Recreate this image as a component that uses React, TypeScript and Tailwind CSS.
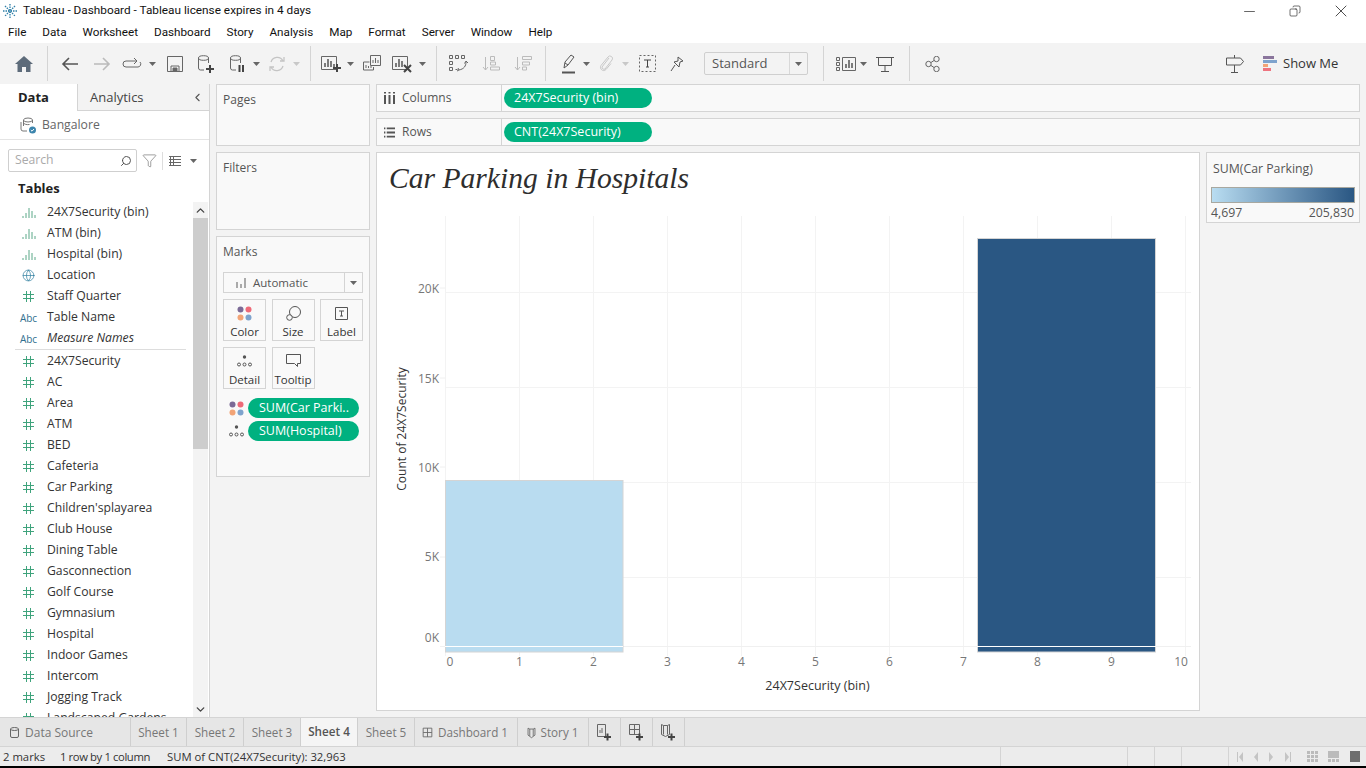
import React from 'react';
import { X, Minus, Copy, ChevronLeft, ChevronUp, ChevronDown, Globe, Search, Filter } from 'lucide-react';

const font = 'font-["Open_Sans","Noto_Sans",sans-serif]';

const Caret = ({ light = false }: { light?: boolean }) => (
    <svg width="7" height="4" viewBox="0 0 7 4" className="shrink-0">
        <path d="M0 0h7L3.500 4z" fill={light ? '#c8c8c8' : '#666'} />
    </svg>
);

const Sep = () => <div className="w-px h-[35px] bg-[#d4d4d4] shrink-0" />;

// toolbar drawings
const Ico = ({ children, w = 20, h = 20 }: { children: React.ReactNode; w?: number; h?: number }) => (
    <svg width={w} height={h} viewBox={`0 0 ${w} ${h}`} fill="none" stroke="#666" strokeWidth="1" className="shrink-0">
        {children}
    </svg>
);

const Plus = ({ x, y }: { x: number; y: number }) => (
    <path d={`M${x - 4} ${y}h8M${x} ${y - 4}v8`} stroke="#444" strokeWidth="2" />
);

const Toolbar = () => (
    <div className="h-[41px] bg-[#f3f3f3] flex items-center shrink-0">
        <div className="w-[47px] flex justify-center">
            <svg width="18" height="16" viewBox="0 0 18 16"><path d="M9 0 0 8h2.500v8h4.500v-5h4v5h4.500V8H18z" fill="#5d6b7a" /></svg>
        </div>
        <Sep />
        <div className="ml-[13px] flex items-center">
            <Ico w={18} h={16}><path d="M17 8H2M8 2 2 8l6 6" stroke="#555" strokeWidth="1.600" /></Ico>
            <div className="w-[14px]" />
            <Ico w={18} h={16}><path d="M1 8h15M10 2l6 6-6 6" stroke="#bbb" strokeWidth="1.600" /></Ico>
            <div className="w-[11px]" />
            <Ico w={20} h={14}><path d="M15 4H4a3 3 0 0 0 0 6h12a3 3 0 0 0 2-5M12 1l3 3-3 3" /></Ico>
            <div className="w-[7px]" />
            <Caret />
            <div className="w-[11px]" />
            <Ico w={16} h={16}><path d="M.5.500h15v15H.5zM4 15.500V10h8v5.500" /><path d="M6 12h4v3H6z" fill="#666" /></Ico>
            <div className="w-[14px]" />
            <Ico w={18} h={18}><ellipse cx="6.500" cy="3" rx="5" ry="2.300" /><path d="M1.500 3v10a2 2 0 0 0 2 2H7M11.500 3v5" /><Plus x={13} y={14} /></Ico>
            <div className="w-[14px]" />
            <Ico w={18} h={18}><ellipse cx="6.500" cy="3" rx="5" ry="2.300" /><path d="M1.500 3v10a2 2 0 0 0 2 2H7M11.500 3v5" /><path d="M10.500 10v7M14 10v7" stroke="#444" strokeWidth="2" /></Ico>
            <div className="w-[6px]" />
            <Caret />
            <div className="w-[8px]" />
            <Ico w={18} h={18}><path d="M3 7a6.500 6.500 0 0 1 12-1M15 11a6.500 6.500 0 0 1-12 1M16 2v4h-4M2 16v-4h4" stroke="#c4c4c4" strokeWidth="1.300" /></Ico>
            <div className="w-[7px]" />
            <Caret light />
        </div>
        <div className="w-[10px]" />
        <Sep />
        <div className="ml-[10px] flex items-center">
            <Ico w={22} h={18}><path d="M.5 1.500h15v13H.5z" /><path d="M4 12V8M7 12V4M10 12V6M13 12V9" stroke="#555" strokeWidth="1.500" /><Plus x={16} y={13} /></Ico>
            <div className="w-[4px]" />
            <Caret />
            <div className="w-[9px]" />
            <Ico w={20} h={18}><path d="M7.500.500h10v10h-10zM.5 7h6M.5 7v8h10v-3" /><path d="M10 8V5M12.500 8V3M15 8V5M3 13v-3M5.500 13v-2M8 13v-2" /></Ico>
            <div className="w-[9px]" />
            <Ico w={22} h={18}><path d="M.5 1.500h15v13H.5z" /><path d="M4 12V8M7 12V4M10 12V6" stroke="#555" strokeWidth="1.500" /><path d="m12 10 7 7M19 10l-7 7" stroke="#444" strokeWidth="2" /></Ico>
            <div className="w-[5px]" />
            <Caret />
        </div>
        <div className="w-[10px]" />
        <Sep />
        <div className="ml-[12px] flex items-center">
            <Ico w={20} h={18}><path d="M.5.500h3v3h-3zM6.500.500h3v3h-3zM12.500.500h3v3h-3zM.5 6.500h3v3h-3zM.5 12.500h3v3h-3zM6.500 14.500h2" /><path d="M17 7c0 4-2 7-7 8M9 13l1 2-2 1M15.500 8.500 17 6l2 2" /></Ico>
            <div className="w-[13px]" />
            <Ico w={18} h={18}><path d="M3.500 2v13M1 12l2.500 3L6 12" stroke="#bbb" /><path d="M8.500 1.500h4v4h-4zM8.500 7h5v3h-5zM8.500 12h9v3h-9z" stroke="#bbb" /></Ico>
            <div className="w-[14px]" />
            <Ico w={18} h={18}><path d="M3.500 2v13M1 12l2.500 3L6 12" stroke="#bbb" /><path d="M8.500 1.500h9v3h-9zM8.500 7h7v3h-7zM8.500 12h4v3h-4z" stroke="#bbb" /></Ico>
        </div>
        <div className="w-[13px]" />
        <Sep />
        <div className="ml-[16px] flex items-center">
            <Ico w={14} h={20}><path d="M2 14 3 8l6-7 3 2-6 8zM3 9l3 2" stroke="#555" /><path d="M0 18.500h13" stroke="#555" strokeWidth="2" /></Ico>
            <div className="w-[7px]" />
            <Caret />
            <div className="w-[9px]" />
            <Ico w={14} h={18}><path d="M10 3 3 12a2 2 0 0 0 3 2l7-9a2.500 2.500 0 0 0-4-3L2 10.500c-2 3 2 7 5 4l5-6" stroke="#c8c8c8" /></Ico>
            <div className="w-[9px]" />
            <Caret light />
            <div className="w-[10px]" />
            <Ico w={17} h={17}><path d="M.5.500h16v16H.5z" strokeDasharray="2 2" /><path d="M5 5h7M8.500 5v7M7 12h3" stroke="#444" /></Ico>
            <div className="w-[14px]" />
            <Ico w={14} h={16}><path d="M8 1l5 4-3 1-1 5-5-5 4-1zM5 9l-4 6" stroke="#555" /></Ico>
        </div>
        <div className="ml-[20px] w-[104px] h-[23px] border border-[#cfcfcf] rounded-[2px] flex items-center">
            <span className="flex-1 pl-[7px] text-[13px] text-[#555]">Standard</span>
            <div className="w-[18px] h-full border-l border-[#d8d8d8] flex items-center justify-center"><Caret /></div>
        </div>
        <div className="w-[15px]" />
        <Sep />
        <div className="ml-[12px] flex items-center">
            <Ico w={20} h={14}><path d="M.5.500h3v3h-3zM.5 5.500h3v3h-3zM.5 10.500h3v3h-3zM6.500.500h13v13h-13z" /><path d="M10 11V7M13 11V3M16 11V6" stroke="#555" strokeWidth="1.500" /></Ico>
            <div className="w-[4px]" />
            <Caret />
            <div className="w-[9px]" />
            <Ico w={18} h={16}><path d="M0 1.500h18M2.500 1.500v8h13v-8M9 9.500V15M5 15.500h8" stroke="#555" /></Ico>
        </div>
        <div className="w-[15px]" />
        <Sep />
        <div className="ml-[15px]">
            <Ico w={15} h={16}><circle cx="3.500" cy="8" r="2.700" /><circle cx="11.500" cy="3" r="2.700" /><circle cx="11.500" cy="13" r="2.700" /><path d="m6 6.500 3-2M6 9.500l3 2" /></Ico>
        </div>
        <div className="flex-1" />
        <Ico w={18} h={18}><path d="M.5 3h14l3 3.500-3 3.500H.5zM8.500 0v3M8.500 10v7M5 17.500h7" stroke="#555" /></Ico>
        <div className="w-[19px]" />
        <div className="flex flex-col gap-px w-[14px]">
            <div className="h-[3px] w-[11px] bg-[#8a759c]" />
            <div className="h-[3px] w-[14px] bg-[#7ea3cd]" />
            <div className="h-[3px] w-[5px] bg-[#f2a477]" />
            <div className="h-[3px] w-[8px] bg-[#ee747f]" />
        </div>
        <span className="ml-[6px] mr-[28px] text-[13px] text-[#333] w-[55px] whitespace-nowrap">Show Me</span>
    </div>
);

type FieldKind = 'bin' | 'geo' | 'num' | 'abc';

const FieldIcon = ({ kind }: { kind: FieldKind }) => {
    if (kind === 'bin') {
        return (
            <svg width="14" height="12" viewBox="0 0 14 12" stroke="#5aa888">
                <path d="M1 11V9M4 11V6M7 11V1M10 11V4M13 11V8" strokeWidth="1" />
            </svg>
        );
    }
    if (kind === 'geo') return <Globe size={13} color="#2f7f9f" strokeWidth={1.300} />;
    if (kind === 'abc') return <span className="text-[10px] text-[#2f6f8f] leading-none">Abc</span>;
    return (
        <svg width="11" height="11" viewBox="0 0 11 11" stroke="#3fa37c" strokeWidth="1">
            <path d="M3.500 0v11M7.500 0v11M0 3.500h11M0 7.500h11" />
        </svg>
    );
};

const Field = ({ kind, name, italic = false }: { kind: FieldKind; name: string; italic?: boolean }) => (
    <div className="h-[21px] flex items-center shrink-0">
        <div className="w-[47px] pl-[20px] pr-[10px] flex justify-center shrink-0"><FieldIcon kind={kind} /></div>
        <span className={`text-[12.200px] text-[#333] whitespace-nowrap ${italic ? 'italic' : ''}`}>{name}</span>
    </div>
);

const dims: [FieldKind, string][] = [
    ['bin', '24X7Security (bin)'],
    ['bin', 'ATM (bin)'],
    ['bin', 'Hospital (bin)'],
    ['geo', 'Location'],
    ['num', 'Staff Quarter'],
    ['abc', 'Table Name'],
];

const measures = [
    '24X7Security', 'AC', 'Area', 'ATM', 'BED', 'Cafeteria', 'Car Parking', "Children'splayarea",
    'Club House', 'Dining Table', 'Gasconnection', 'Golf Course', 'Gymnasium', 'Hospital',
    'Indoor Games', 'Intercom', 'Jogging Track', 'Landscaped Gardens',
];

const DataPane = () => (
    <div className="w-[210px] bg-white border-r border-[#d4d4d4] flex flex-col shrink-0 overflow-hidden">
        <div className="h-[27px] flex shrink-0 text-[13px]">
            <div className="w-[77px] pl-[18px] pt-[4px] font-bold text-[#222] bg-white">Data</div>
            <div className="flex-1 flex items-center justify-between bg-[#f3f3f3] border-l border-b border-[#d4d4d4] pl-[12px] pr-[5px] pt-[1px] text-[#444]">
                Analytics
                <ChevronLeft size={13} color="#555" />
            </div>
        </div>
        <div className="h-[29px] border-b border-[#e4e4e4] flex items-center pl-[20px] shrink-0">
            <svg width="17" height="17" viewBox="0 0 17 17" fill="none" stroke="#777">
                <ellipse cx="8" cy="3" rx="4.500" ry="2" />
                <path d="M3.500 3v6M12.500 3v3M1 5v7a2 2 0 0 0 2 2h4" />
                <path d="M3.500 6a4.500 2 0 0 0 6 1.500" />
                <circle cx="12.500" cy="13" r="3.500" fill="#3c85ad" stroke="none" />
                <path d="m10.800 13 1.200 1.200 2-2.200" stroke="#fff" />
            </svg>
            <span className="ml-[5px] text-[12.200px] text-[#666]">Bangalore</span>
        </div>
        <div className="h-[41px] flex items-start pl-[8px] pt-[9px] shrink-0">
            <div className="w-[129px] h-[23px] border border-[#cfcfcf] rounded-[2px] flex items-center justify-between pl-[6px] pr-[4px]">
                <span className="text-[12.200px] text-[#aaa]">Search</span>
                <Search size={12} color="#555" className="-scale-x-100" />
            </div>
            <div className="h-[23px] flex items-center">
                <Filter size={15} color="#666" strokeWidth={1} className="ml-[5px]" />
                <div className="w-px h-[18px] bg-[#ddd] ml-[5px]" />
                <svg width="12" height="10" viewBox="0 0 12 10" stroke="#666" className="ml-[6px]">
                    <path d="M0 .500h12M0 3.500h12M0 6.500h12M0 9.500h12M1.500 0v10M4.500 0v10" />
                </svg>
                <div className="ml-[9px]"><Caret /></div>
            </div>
        </div>
        <div className="h-[15px] pl-[18px] text-[13px] font-bold text-[#222] leading-[15px] shrink-0">Tables</div>
        <div className="flex flex-1 min-h-0 mt-[6px] overflow-hidden">
            <div className="flex-1 min-w-0 overflow-hidden">
                {dims.map(([k, n]) => <Field key={n} kind={k} name={n} />)}
                <Field kind="abc" name="Measure Names" italic />
                <div className="ml-[15px] mr-[7px] h-px bg-[#ddd] mb-[1px]" />
                {measures.map((n) => <Field key={n} kind="num" name={n} />)}
            </div>
            <div className="w-[15px] mr-[1px] bg-[#f3f3f3] flex flex-col items-center shrink-0">
                <ChevronUp size={13} color="#444" strokeWidth={2.500} className="my-[2px]" />
                <div className="w-full h-[231px] bg-[#cdcdcd] -mt-[1px]" />
                <div className="flex-1" />
                <ChevronDown size={13} color="#444" strokeWidth={2.500} className="mb-[1px]" />
            </div>
        </div>
    </div>
);

const MarkCard = ({ label, children }: { label: string; children: React.ReactNode }) => (
    <div className="h-[42px] border border-[#d4d4d4] flex flex-col items-center justify-end">
        <div className="h-[22px] flex items-center justify-center">{children}</div>
        <span className="text-[11.500px] text-[#333] leading-[16px]">{label}</span>
    </div>
);

const ColorDots = () => (
    <svg width="15" height="15" viewBox="0 0 15 15">
        <circle cx="3.500" cy="3.500" r="3" fill="#7b6a96" /><circle cx="11.500" cy="3.500" r="3" fill="#ee6a78" />
        <circle cx="3.500" cy="11.500" r="3" fill="#f2a477" /><circle cx="11.500" cy="11.500" r="3" fill="#7ea3cd" />
    </svg>
);

const DetailDots = () => (
    <svg width="15" height="12" viewBox="0 0 15 12" fill="none" stroke="#555">
        <circle cx="7.500" cy="2" r="1.700" fill="#555" stroke="none" />
        <circle cx="2" cy="9.500" r="1.500" /><circle cx="7.500" cy="9.500" r="1.500" /><circle cx="13" cy="9.500" r="1.500" />
    </svg>
);

const Pill = ({ label, className = '' }: { label: string; className?: string }) => (
    <div className={`bg-[#00b180] rounded-full text-white text-[12.500px] whitespace-nowrap flex items-center ${className}`}>{label}</div>
);

const ShelfPanes = () => (
    <div className="w-[154px] flex flex-col gap-[6px] shrink-0 text-[12px] text-[#555]">
        <div className="h-[62px] bg-[#f9f9f9] border border-[#d4d4d4] px-[6px] pt-[6px]">Pages</div>
        <div className="h-[78px] bg-[#f9f9f9] border border-[#d4d4d4] px-[6px] pt-[6px]">Filters</div>
        <div className="h-[241px] bg-[#f9f9f9] border border-[#d4d4d4] px-[6px] pt-[6px]">
            <div>Marks</div>
            <div className="mt-[11px] w-[140px] h-[21px] border border-[#d4d4d4] flex items-center bg-[#f9f9f9]">
                <svg width="10" height="10" viewBox="0 0 10 10" className="ml-[12px]" fill="#aaa"><path d="M0 4h2v6H0zM4 6h2v4H4zM8 0h2v10H8z" /></svg>
                <span className="ml-[7px] flex-1 text-[11.500px] text-[#555]">Automatic</span>
                <div className="w-[18px] h-full border-l border-[#d4d4d4] flex items-center justify-center"><Caret /></div>
            </div>
            <div className="mt-[6px] grid grid-cols-[43px_43px_43px] gap-x-[5.500px] gap-y-[6px] w-[140px]">
                <MarkCard label="Color"><ColorDots /></MarkCard>
                <MarkCard label="Size">
                    <svg width="15" height="15" viewBox="0 0 15 15" fill="none" stroke="#555"><circle cx="9" cy="6" r="5.500" /><circle cx="3.500" cy="11.500" r="2.800" fill="#f9f9f9" /></svg>
                </MarkCard>
                <MarkCard label="Label">
                    <svg width="13" height="13" viewBox="0 0 13 13" fill="none" stroke="#555"><path d="M.5.500h12v12H.5zM4 4h5M6.500 4v5M5 9h3" /></svg>
                </MarkCard>
                <MarkCard label="Detail"><DetailDots /></MarkCard>
                <MarkCard label="Tooltip">
                    <svg width="15" height="14" viewBox="0 0 15 14" fill="none" stroke="#555"><path d="M.5.500h14v9h-3v3l-3-3H.5z" /></svg>
                </MarkCard>
            </div>
            <div className="mt-[9px] pl-[6px] flex items-center">
                <ColorDots />
                <Pill label="SUM(Car Parki.." className="ml-[4px] w-[111px] h-[20px] pl-[11px]" />
            </div>
            <div className="mt-[3px] pl-[6px] flex items-center">
                <DetailDots />
                <Pill label="SUM(Hospital)" className="ml-[4px] w-[111px] h-[20px] pl-[11px]" />
            </div>
        </div>
    </div>
);

const Shelf = ({ icon, label, pill }: { icon: React.ReactNode; label: string; pill: string }) => (
    <div className="h-[28px] bg-[#f9f9f9] border border-[#d4d4d4] flex items-center shrink-0">
        <div className="w-[125px] h-full border-r border-[#d4d4d4] flex items-center pl-[7px] text-[12px] text-[#555] gap-[7px] shrink-0">
            {icon}
            {label}
        </div>
        <Pill label={pill} className="ml-[2px] w-[148px] h-[20px] pl-[10px]" />
    </div>
);

const xTicks = [445.500, 519.500, 593.500, 667.500, 741.500, 815.500, 889.500, 963.500, 1037.500, 1111.500, 1185.500];
const yGrid = [292.500, 387.500, 482.500, 577.500];
const yLabels: [string, number][] = [['20K', 288], ['15K', 378], ['10K', 467], ['5K', 556], ['0K', 637]];

const Chart = () => (
    <div className="flex-1 min-h-0 bg-white border border-[#d4d4d4] flex flex-col">
        <div className="h-[46px] pl-[12px] pt-[5px] font-['Liberation_Serif',serif] italic text-[29.600px] leading-[40px] text-[#2e2e2e] shrink-0 whitespace-nowrap">Car Parking in Hospitals</div>
        <svg viewBox="377 199 822 511" className="w-[822px] h-[511px] block">
            {xTicks.map((x) => <line key={x} x1={x} x2={x} y1={216} y2={656} stroke="#f3f3f3" />)}
            {yGrid.map((y) => <line key={y} x1={445} x2={1191} y1={y} y2={y} stroke="#f3f3f3" />)}
            <line x1={440} x2={1191} y1={646.500} y2={646.500} stroke="#f0f0f0" />
            {[288, 378, 467, 557].map((y) => <line key={y} x1={440} x2={445} y1={y} y2={y} stroke="#f0f0f0" />)}
            <rect x={445.500} y={480.500} width={177.500} height={171.500} fill="#b9dcf0" stroke="#d4d4d4" />
            <rect x={977.500} y={238.500} width={178} height={413.500} fill="#2a5783" stroke="#d4d4d4" />
            <line x1={445} x2={623} y1={646.500} y2={646.500} stroke="#fff" />
            <line x1={977} x2={1156} y1={646.500} y2={646.500} stroke="#fff" />
            <g fontFamily="'Open Sans',sans-serif" fontSize="12" fill="#777">
                {yLabels.map(([t, y]) => <text key={t} x={439} y={y + 4.500} textAnchor="end">{t}</text>)}
                {xTicks.map((x, i) => (
                    <text key={x} x={i === 0 ? 450 : i === 10 ? 1181 : x} y={666} textAnchor="middle">{i}</text>
                ))}
            </g>
            <g fontFamily="'Open Sans',sans-serif" fontSize="12.500" fill="#333">
                <text x={817.500} y={690} textAnchor="middle">24X7Security (bin)</text>
            </g>
            <g fontFamily="'Open Sans',sans-serif" fontSize="12" fill="#333">
                <text transform="translate(406 429) rotate(-90)" textAnchor="middle">Count of 24X7Security</text>
            </g>
        </svg>
    </div>
);

const Legend = () => (
    <div className="w-[154px] h-[71px] bg-[#f9f9f9] border border-[#d4d4d4] px-[4px] shrink-0">
        <div className="pt-[7px] pl-[2px] text-[12.300px] text-[#555] leading-[17px]">SUM(Car Parking)</div>
        <div className="mt-[10px] h-[16px] border border-[#a8a8a0] bg-gradient-to-r from-[#b9ddf1] to-[#2a5783]" />
        <div className="flex justify-between text-[12.300px] text-[#555] leading-[17px] mt-[1px]">
            <span>4,697</span>
            <span className="pr-[1px]">205,830</span>
        </div>
    </div>
);

const tabCls = 'h-full flex items-center justify-center border-r border-[#cfcfcf] text-[11.700px] text-[#777] shrink-0 whitespace-nowrap';

const TabIcon = ({ d }: { d: string }) => (
    <svg width="13" height="13" viewBox="0 0 15 15" fill="none" stroke="#666"><path d={d} /></svg>
);

const Tabs = () => (
    <div className="h-[30px] bg-[#e6e6e6] border-t border-b border-[#d4d4d4] flex items-center shrink-0">
        <div className="h-full w-[131px] flex items-center pl-[10px] pt-[1px] gap-[6px] border-r border-[#cfcfcf] text-[12px] text-[#777] shrink-0 whitespace-nowrap">
            <svg width="9" height="11" viewBox="0 0 9 11" fill="none" stroke="#666"><ellipse cx="4.500" cy="2" rx="4" ry="1.500" /><path d="M.5 2v7a1.500 1.500 0 0 0 1.500 1.500h5A1.500 1.500 0 0 0 8.500 9V2" /></svg>
            Data Source
        </div>
        <div className={`${tabCls} w-[56px] pt-[1px]`}>Sheet 1</div>
        <div className={`${tabCls} w-[57px] pt-[1px]`}>Sheet 2</div>
        <div className={`${tabCls} w-[57px] pt-[1px]`}>Sheet 3</div>
        <div className={`${tabCls} w-[57px] bg-[#f5f5f5] font-semibold !text-[#555] pb-[1px]`}>Sheet 4</div>
        <div className={`${tabCls} w-[57px] pt-[1px]`}>Sheet 5</div>
        <div className={`${tabCls} w-[103px] gap-[4px] pt-[1px] pr-[3px]`}><TabIcon d="M2.500 2.500h10v10h-10zM7.500 2.500v10M2.500 7.500h10" />Dashboard 1</div>
        <div className={`${tabCls} w-[71px] gap-[3px] pt-[1px] pr-[3px]`}><TabIcon d="M3.500 2.500v8l4 3 4-3v-8l-2 1h-4zM5.500 3.500v8M9.500 3.500v8" />Story 1</div>
        <div className={`${tabCls} w-[32px]`}>
            <svg width="15" height="17" viewBox="0 0 15 17" fill="none" stroke="#666"><path d="M.5.500h8v12h-8zM3 9V6M5 9V4" /><path d="M7 13h7M10.500 9.500v7" stroke="#444" strokeWidth="2" /></svg>
        </div>
        <div className={`${tabCls} w-[32px]`}>
            <svg width="15" height="17" viewBox="0 0 15 17" fill="none" stroke="#666"><path d="M.5.500h10v10H.5zM5.500.500v10M.5 5.500h10" /><path d="M7 13h7M10.500 9.500v7" stroke="#444" strokeWidth="2" /></svg>
        </div>
        <div className={`${tabCls} w-[32px]`}>
            <svg width="15" height="17" viewBox="0 0 15 17" fill="none" stroke="#666"><path d="M.5.500l2 1h4l2-1v10l-4 2-4-2zM2.500 1.500v9M6.500 1.500v9" /><path d="M7 13h7M10.500 9.500v7" stroke="#444" strokeWidth="2" /></svg>
        </div>
    </div>
);

const StatusBar = () => (
    <div className="h-[19px] bg-[#ececec] flex items-center text-[11.300px] text-[#333] shrink-0 whitespace-nowrap">
        <span className="pl-[3px] pt-[2px] w-[60px]">2 marks</span>
        <span className="w-[107px] pt-[2px] tracking-[-0.4px]">1 row by 1 column</span>
        <span className="w-[833px] pt-[2px]">SUM of CNT(24X7Security): 32,963</span>
        <div className="h-full w-[127px] border-l border-[#d4d4d4]" />
        <div className="h-full w-[27px] border-l border-[#d4d4d4]" />
        <div className="h-full w-[27px] border-l border-[#d4d4d4]" />
        <div className="h-full w-[47px] border-l border-[#d4d4d4]" />
        <div className="h-full flex-1 border-l border-[#d4d4d4] flex items-center pl-[8px]">
            <svg width="54" height="10" viewBox="0 0 54 10" fill="#c4c4c4"><path d="M0 0h1v10H0zM6 0v10L2 5zM21 0v10l-4-5zM32 0v10l4-5zM48 0v10l4-5zM53 0h1v10h-1z" /></svg>
            <svg width="11" height="11" viewBox="0 0 11 11" fill="#bbb" className="ml-[16px]"><path d="M0 0h3v3H0zM4 0h3v3H4zM8 0h3v3H8zM0 4h3v3H0zM4 4h3v3H4zM8 4h3v3H8zM0 8h3v3H0zM4 8h3v3H4zM8 8h3v3H8z" /></svg>
            <svg width="11" height="11" viewBox="0 0 11 11" fill="#bbb" className="ml-[10px]"><path d="M0 0h11v7H0zM0 8h3v3H0zM4 8h3v3H4zM8 8h3v3H8z" /></svg>
            <div className="ml-[11px] w-[10px] h-[11px] bg-[#6e6e6e]" />
        </div>
    </div>
);

export default function App() {
    const menu = ['File', 'Data', 'Worksheet', 'Dashboard', 'Story', 'Analysis', 'Map', 'Format', 'Server', 'Window', 'Help'];
    return (
        <div className={`w-[1366px] h-[768px] flex flex-col bg-[#f3f3f3] overflow-hidden ${font}`}>
            <div className="h-[22px] bg-white flex items-center shrink-0 text-[11.800px] text-[#111] font-['Roboto',sans-serif]">
                <svg width="14" height="14" viewBox="0 0 14 14" stroke="#2e7fa8" strokeWidth="1.300" strokeDasharray="1.500 1" className="ml-[3px]">
                    <path d="M7 0v14M0 7h14M2 2l10 10M12 2 2 12" />
                </svg>
                <span className="ml-[6px]">Tableau - Dashboard - Tableau license expires in 4 days</span>
                <div className="flex-1" />
                <div className="w-[46px] flex justify-center"><Minus size={17} strokeWidth={0.900} color="#111" /></div>
                <div className="w-[46px] flex justify-center"><Copy size={12} strokeWidth={1.200} color="#111" className="-scale-x-100" /></div>
                <div className="w-[46px] mr-[2px] flex justify-center"><X size={20} strokeWidth={0.900} color="#111" /></div>
            </div>
            <div className="h-[21px] bg-white flex items-center pl-[8px] gap-[16px] shrink-0 text-[11.700px] text-[#111] font-['Roboto',sans-serif]">
                {menu.map((m) => <span key={m}>{m}</span>)}
            </div>
            <Toolbar />
            <div className="flex-1 min-h-0 flex">
                <DataPane />
                <div className="flex-1 flex pl-[6px] pr-[6px] gap-[6px] min-w-0">
                    <ShelfPanes />
                    <div className="flex-1 min-w-0 flex flex-col pb-[6px]">
                        <div className="flex flex-col gap-[6px] shrink-0">
                            <Shelf
                                label="Columns"
                                pill="24X7Security (bin)"
                                icon={<svg width="11" height="12" viewBox="0 0 11 12" fill="#555"><path d="M0 3h2v9H0zM4.500 3h2v9h-2zM9 3h2v9H9zM0 0h2v1.500H0zM4.500 0h2v1.500h-2zM9 0h2v1.500H9z" /></svg>}
                            />
                            <Shelf
                                label="Rows"
                                pill="CNT(24X7Security)"
                                icon={<svg width="11" height="11" viewBox="0 0 12 11" fill="#555"><path d="M3 0h9v2H3zM3 4.500h9v2H3zM3 9h9v2H3zM0 0h1.500v2H0zM0 4.500h1.500v2H0zM0 9h1.500v2H0z" /></svg>}
                            />
                        </div>
                        <div className="flex-1 min-h-0 flex gap-[6px] mt-[6px]">
                            <Chart />
                            <Legend />
                        </div>
                    </div>
                </div>
            </div>
            <Tabs />
            <StatusBar />
            <div className="h-[2px] bg-black shrink-0" />
        </div>
    );
}
